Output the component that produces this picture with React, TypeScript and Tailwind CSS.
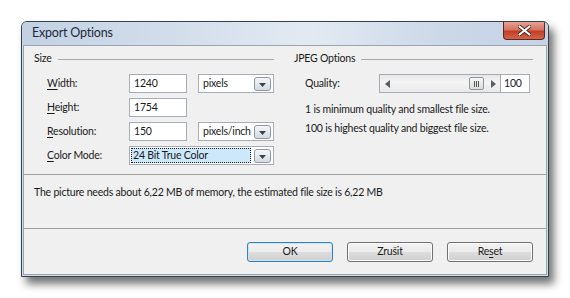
import React from "react";

const font = { fontFamily: 'Lato, "Open Sans", sans-serif' };
const T = "text-[10.5px] tracking-[-0.2px] text-[#1a1a1a]";

function DropBtn() {
  return (
    <div className="w-[17px] h-[14px] rounded-[3px] border border-[#8e98a4] bg-gradient-to-b from-[#f4f6f8] to-[#d6dbe1] flex items-end justify-center pb-[3px]">
      <svg width="7" height="4" viewBox="0 0 7 4">
        <path d="M0 0 H7 L3.5 4 Z" fill="#3a4450" />
      </svg>
    </div>
  );
}

function TextBox({ value }: { value: string }) {
  return (
    <div className={`w-[58px] h-[19px] border border-[#a6adb6] bg-white flex items-center pl-[4px] ${T}`}>
      {value}
    </div>
  );
}

function Select({ value, w, focused }: { value: string; w: string; focused?: boolean }) {
  return (
    <div className={`${w} h-[19px] border border-[#a6adb6] bg-white flex items-center pr-[2px] ${T}`}>
      {focused ? (
        <div className="flex-1 h-[15px] ml-[1px] mr-[3px] bg-[#cce8fa] border border-dotted border-[#222] flex items-center pl-[1px] leading-none">
          {value}
        </div>
      ) : (
        <div className="flex-1 pl-[4px]">{value}</div>
      )}
      <DropBtn />
    </div>
  );
}

function Label({ first, rest }: { first: string; rest: string }) {
  return (
    <div className={`w-[82px] ${T}`}>
      <span className="underline underline-offset-2">{first}</span>
      {rest}
    </div>
  );
}

function GroupHeader({ title }: { title: string }) {
  return (
    <div className={`flex items-center gap-[6px] h-[14px] ${T}`}>
      <span>{title}</span>
      <div className="flex-1 h-px bg-[#a9a9a9]" />
    </div>
  );
}

function Button({ children, def }: { children: React.ReactNode; def?: boolean }) {
  return (
    <div
      className={`w-[86px] h-[20px] rounded-[3px] border ${
        def ? "border-[#3c7fb1] shadow-[inset_0_0_0_1px_#c4e5f6]" : "border-[#707070] shadow-[inset_0_0_0_1px_#fcfcfc]"
      } bg-[linear-gradient(#f2f2f2_0%,#ebebeb_50%,#dddddd_51%,#cfcfcf_100%)] flex items-center justify-center ${T}`}
    >
      {children}
    </div>
  );
}

export default function App() {
  return (
    <div className="w-[570px] h-[298px] bg-white pt-[21px] pl-[21px]" style={font}>
      <div className="w-[528px] h-[256px] rounded-t-[6px] border border-[#3a414b] bg-[#cfdae8] shadow-[5px_7px_9px_rgba(0,0,0,0.55)] flex flex-col overflow-hidden">
        {/* title bar */}
        <div className="h-[23px] shrink-0 relative bg-[linear-gradient(90deg,#c3d1e4_0%,#d3deeb_30%,#e3eaf3_55%,#cbd8e8_80%,#c5d3e5_100%)] flex items-center pl-[10px]">
          <span className="text-[12.5px] tracking-[-0.2px] text-[#1d2a3c]">Export Options</span>
          <div className="absolute right-[3px] top-0 w-[42px] h-[18px] rounded-b-[4px] border border-t-0 border-[#5a2a22] bg-[linear-gradient(#e4a394_0%,#d5735f_45%,#c13f26_55%,#d0654c_100%)] flex items-center justify-center">
            <svg width="13" height="11" viewBox="0 0 13 11">
              <path d="M1.5 1.5 L11.5 9.5 M11.5 1.5 L1.5 9.5" stroke="#4a1a12" strokeWidth="3.6" strokeLinecap="round" />
              <path d="M1.5 1.5 L11.5 9.5 M11.5 1.5 L1.5 9.5" stroke="#ffffff" strokeWidth="2.2" strokeLinecap="round" />
            </svg>
          </div>
        </div>
        {/* client area */}
        <div className="flex-1 mx-px mb-px border border-[#9aa5b3] bg-[#f0f0f0] flex flex-col">
          <div className="flex pt-[6px] pl-[10px] pr-[13px] h-[128px] gap-[20px]">
            {/* Size */}
            <div className="w-[240px] flex flex-col">
              <GroupHeader title="Size" />
              <div className="flex flex-col gap-[5px] mt-[8px] pl-[13px]">
                <div className="flex items-center">
                  <Label first="W" rest="idth:" />
                  <TextBox value="1240" />
                  <div className="w-[11px]" />
                  <Select value="pixels" w="w-[76px]" />
                </div>
                <div className="flex items-center">
                  <Label first="H" rest="eight:" />
                  <TextBox value="1754" />
                </div>
                <div className="flex items-center">
                  <Label first="R" rest="esolution:" />
                  <TextBox value="150" />
                  <div className="w-[11px]" />
                  <Select value="pixels/inch" w="w-[76px]" />
                </div>
                <div className="flex items-center">
                  <Label first="C" rest="olor Mode:" />
                  <Select value="24 Bit True Color" w="w-[145px]" focused />
                </div>
              </div>
            </div>
            {/* JPEG */}
            <div className="flex-1 flex flex-col">
              <GroupHeader title="JPEG Options" />
              <div className="flex items-center mt-[8px] pl-[11px]">
                <div className={`w-[74px] ${T}`}>Quality:</div>
                <div className="w-[121px] h-[19px] border border-[#a6adb6] border-r-0 bg-[linear-gradient(#e6e6e6,#f4f4f4_40%,#e9e9e9)] flex items-center relative">
                  <svg className="absolute left-[5px] top-[5px]" width="5" height="8" viewBox="0 0 5 8">
                    <path d="M5 0 V8 L0 4 Z" fill="#5a5f66" />
                  </svg>
                  <div className="absolute left-[89px] top-[2px] w-[15px] h-[13px] rounded-[2px] border border-[#8f959c] bg-[linear-gradient(#f8f8f8,#dcdcdc)] flex items-center justify-center gap-[1px]">
                    <div className="w-px h-[6px] bg-[#555]" />
                    <div className="w-px h-[6px] bg-[#555]" />
                    <div className="w-px h-[6px] bg-[#555]" />
                  </div>
                  <svg className="absolute left-[111px] top-[5px]" width="5" height="8" viewBox="0 0 5 8">
                    <path d="M0 0 V8 L5 4 Z" fill="#5a5f66" />
                  </svg>
                </div>
                <div className={`w-[30px] h-[19px] border border-[#a6adb6] bg-white flex items-center pl-[3px] ${T}`}>100</div>
              </div>
              <div className={`pl-[11px] mt-[7px] leading-[19px] ${T}`}>
                <div>1 is minimum quality and smallest file size.</div>
                <div>100 is highest quality and biggest file size.</div>
              </div>
            </div>
          </div>
          <div className="h-px bg-[#a0a0a0]" />
          <div className={`h-[53px] pl-[10px] pt-[10px] ${T}`}>
            The picture needs about 6,22 MB of memory, the estimated file size is 6,22 MB
          </div>
          <div className="h-px bg-[#a0a0a0]" />
          <div className="flex justify-end gap-[14px] pr-[13px] pt-[13px]">
            <Button def>OK</Button>
            <Button>Zrušit</Button>
            <Button>
              Re<span className="underline underline-offset-2">s</span>et
            </Button>
          </div>
        </div>
      </div>
    </div>
  );
}
